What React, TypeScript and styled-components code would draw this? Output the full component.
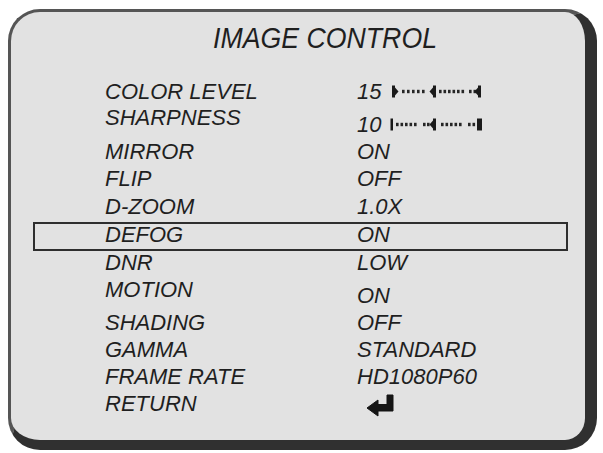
import styled, { createGlobalStyle } from 'styled-components'

const GlobalStyle = createGlobalStyle`
  html, body {
    margin: 0;
    padding: 0;
    background: #ffffff;
  }
  body {
    font-family: "Liberation Sans", Arial, sans-serif;
  }
`

type Tick = { x: number; w: number; arrow?: 'left' | 'right' }
type SliderShape = { dots: number[]; ticks: Tick[] }

const sliders: Record<string, SliderShape> = {
  color: {
    dots: [12, 17, 22, 27, 32, 49, 53.5, 58, 62.5, 67, 71.5, 79, 83.5],
    ticks: [
      { x: 2, w: 3, arrow: 'right' },
      { x: 43, w: 3, arrow: 'left' },
      { x: 88, w: 3, arrow: 'left' },
    ],
  },
  sharp: {
    dots: [6, 10.5, 15, 19.5, 24, 33, 37, 51, 55.5, 60, 64.5, 69, 78, 82.5],
    ticks: [
      { x: 0.5, w: 2.5 },
      { x: 43, w: 3, arrow: 'left' },
      { x: 87, w: 5 },
    ],
  },
}

type MenuRow = {
  label: string
  value?: string
  slider?: string
  icon?: boolean
  shift?: number
  gap?: number
  selected?: boolean
}

const rows: MenuRow[] = [
  { label: 'COLOR LEVEL', value: '15', slider: 'color' },
  { label: 'SHARPNESS', value: '10', slider: 'sharp', shift: 7, gap: -1 },
  { label: 'MIRROR', value: 'ON', gap: 7 },
  { label: 'FLIP', value: 'OFF' },
  { label: 'D-ZOOM', value: '1.0X', gap: 1 },
  { label: 'DEFOG', value: 'ON', selected: true },
  { label: 'DNR', value: 'LOW' },
  { label: 'MOTION', value: 'ON', shift: 6 },
  { label: 'SHADING', value: 'OFF', gap: 6 },
  { label: 'GAMMA', value: 'STANDARD' },
  { label: 'FRAME RATE', value: 'HD1080P60' },
  { label: 'RETURN', icon: true },
]

const Slider = ({ shape }: { shape: SliderShape }) => (
  <SliderSvg width="94" height="13" viewBox="0 0 94 13">
    {shape.dots.map((x) => (
      <rect key={x} x={x} y="4.8" width="2.6" height="3.4" fill="#262626" />
    ))}
    {shape.ticks.map((t) => (
      <g key={t.x} fill="#1a1a1a">
        <rect x={t.x} y="0.5" width={t.w} height="12" />
        {t.arrow === 'left' && (
          <polygon points={`${t.x},2.5 ${t.x - 3.5},6.5 ${t.x},10.5`} />
        )}
        {t.arrow === 'right' && (
          <polygon
            points={`${t.x + t.w},2.5 ${t.x + t.w + 3.5},6.5 ${t.x + t.w},10.5`}
          />
        )}
      </g>
    ))}
  </SliderSvg>
)

const ReturnIcon = () => (
  <IconSvg width="30" height="24" viewBox="0 0 30 24">
    <path
      d="M21 1 H27 V17 H12 V22 L1 14 L12 6 V10.5 H21 Z"
      fill="#151515"
      stroke="#151515"
      strokeWidth="1"
      strokeLinejoin="round"
    />
  </IconSvg>
)

const App = () => {
  return (
    <>
      <GlobalStyle />
      <Panel>
        <TitleBar>
          <TitleText>IMAGE CONTROL</TitleText>
        </TitleBar>
        <MenuList>
          {rows.map((row) => (
            <Row
              key={row.label}
              $selected={row.selected}
              $gap={row.gap ?? 0}
            >
              <Label>{row.label}</Label>
              <Value $shift={row.shift ?? 0}>
                {row.value && <span>{row.value}</span>}
                {row.slider && <Slider shape={sliders[row.slider]} />}
                {row.icon && <ReturnIcon />}
              </Value>
            </Row>
          ))}
        </MenuList>
      </Panel>
    </>
  )
}

export default App

const Panel = styled.div`
  box-sizing: border-box;
  width: 589px;
  height: 441px;
  margin: 9px 0 0 8px;
  padding-top: 8px;
  background: #e2e2e2;
  border-style: solid;
  border-width: 3px 12px 10px 3px;
  border-color: #555555 #303030 #303030 #555555;
  border-radius: 32px;
  color: #1f1f1f;
`

const TitleBar = styled.div`
  height: 36px;
  padding-left: 202px;
`

const TitleText = styled.span`
  display: inline-block;
  font-size: 30px;
  line-height: 36px;
  font-style: italic;
  transform: scaleX(0.89);
  transform-origin: left center;
  white-space: nowrap;
`

const MenuList = styled.div`
  width: 535px;
  margin: 22px 0 0 22px;
  display: flex;
  flex-direction: column;
`

const Row = styled.div<{ $selected?: boolean; $gap: number }>`
  box-sizing: border-box;
  display: grid;
  grid-template-columns: 252px 1fr;
  grid-template-rows: ${(p) => (p.$selected ? '21px' : '27px')};
  font-size: 22px;
  line-height: ${(p) => (p.$selected ? '21px' : '27px')};
  font-style: italic;
  white-space: nowrap;
  margin-top: ${(p) => p.$gap}px;
  padding-left: ${(p) => (p.$selected ? '70px' : '72px')};
  ${(p) =>
    p.$selected &&
    `
    border: 2px solid #2e2e2e;
    padding-bottom: 4px;
    margin: 2px 0 -2px;
  `}
`

const Label = styled.div``

const Value = styled.div<{ $shift: number }>`
  display: flex;
  align-items: center;
  gap: 9px;
  height: 100%;
  padding-top: ${(p) => p.$shift}px;
`

const SliderSvg = styled.svg`
  display: block;
  flex: none;
`

const IconSvg = styled.svg`
  display: block;
  flex: none;
  margin: 4px 0 0 9px;
`
